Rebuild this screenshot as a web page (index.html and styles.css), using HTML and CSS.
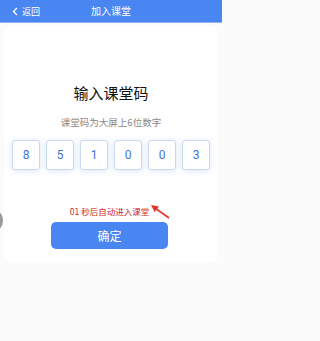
FILE: index.html
```html
<!DOCTYPE html>
<html lang="zh">
<head>
<meta charset="utf-8">
<link rel="stylesheet" href="styles.css">
</head>
<body>
<div class="page">
  <header class="bar">
    <div class="back">
      <svg class="chev" width="6" height="9" viewBox="0 0 6 9"><path d="M5 1 L1.5 4.5 L5 8" fill="none" stroke="#fff" stroke-width="1.4"/></svg>
      <span>返回</span>
    </div>
    <div class="title">加入课堂</div>
  </header>
  <main class="card">
    <h1 class="heading">输入课堂码</h1>
    <p class="sub">课堂码为大屏上6位数字</p>
    <div class="codes">
      <div class="cell">8</div>
      <div class="cell">5</div>
      <div class="cell">1</div>
      <div class="cell">0</div>
      <div class="cell">0</div>
      <div class="cell">3</div>
    </div>
    <div class="hint-row">
      <span class="hint">01 秒后自动进入课堂</span>
      <svg class="arrow" width="22" height="16" viewBox="0 0 22 16"><path d="M20 14 L6 4" stroke="#e8322c" stroke-width="1.6" fill="none"/><path d="M2 1 L10 2.5 L5.5 8 Z" fill="#e8322c"/></svg>
    </div>
    <button class="ok">确定</button>
  </main>
  <div class="float"></div>
</div>
</body>
</html>
```
FILE: styles.css
```css
* { box-sizing: border-box; margin: 0; padding: 0; }
html, body { width: 222px; height: 341px; overflow: hidden; }
body {
  font-family: "Noto Sans CJK SC", "Noto Sans", sans-serif;
  background: #fbfbfb;
}
.page { position: relative; height: 341px; }
.bar {
  height: 23px;
  background: #4a86f1;
  display: flex;
  align-items: center;
  justify-content: center;
  position: relative;
  color: #fff;
  border-bottom: 1px solid #8fb4f5;
}
.back {
  position: absolute;
  left: 12px;
  top: 0;
  height: 23px;
  display: flex;
  align-items: center;
  gap: 4px;
  font-size: 9px;
}
.title { font-size: 10px; line-height: 1; }
.card {
  margin: 3px 4px 0;
  height: 236px;
  background: #fff;
  border-radius: 6px;
  display: flex;
  flex-direction: column;
  align-items: center;
}
.heading {
  margin-top: 57px;
  font-size: 15px;
  font-weight: 400;
  color: #111;
  line-height: 20px;
}
.sub {
  margin-top: 13px;
  font-size: 9.5px;
  color: #888;
  line-height: 12px;
}
.codes {
  margin-top: 12px;
  display: flex;
  gap: 6px;
}
.cell {
  width: 28px;
  height: 30px;
  border: 1px solid #c9d8f1;
  border-radius: 3px;
  background: #fff;
  box-shadow: 0 1px 6px rgba(120, 160, 230, 0.25);
  display: flex;
  align-items: center;
  justify-content: center;
  color: #3f72d8;
  font-family: "Roboto", "Noto Sans", sans-serif;
  font-size: 12px;
}
.hint-row {
  margin-top: 35px;
  position: relative;
  height: 12px;
  display: flex;
  align-items: center;
}
.hint {
  font-size: 8.5px;
  color: #cc2a27;
  line-height: 12px;
  margin-left: -3px;
}
.arrow {
  position: absolute;
  left: 76px;
  top: -1px;
}
.ok {
  margin-top: 5px;
  width: 117px;
  height: 27px;
  border: none;
  border-radius: 5px;
  background: #4a86f1;
  color: #fff;
  font-family: "Noto Sans CJK SC", sans-serif;
  font-size: 12px;
  margin-left: -3px;
}
.float {
  position: absolute;
  left: -22px;
  top: 208px;
  width: 25px;
  height: 25px;
  border-radius: 50%;
  background: #9a9a9a;
}
```
